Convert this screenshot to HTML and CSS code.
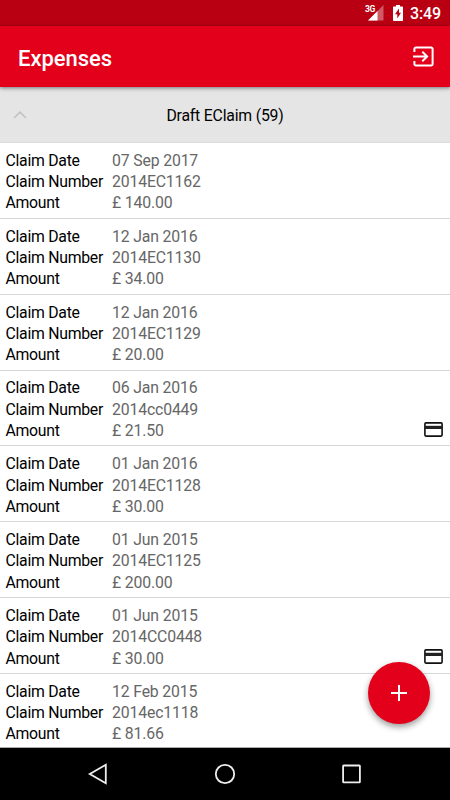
FILE: index.html
```
<!DOCTYPE html>
<html lang="en">
<head>
<meta charset="utf-8">
<title>Expenses</title>
<link rel="stylesheet" href="styles.css">
</head>
<body>
<div class="screen">
  <div class="status">
    <svg class="signal" width="16" height="17" viewBox="0 0 16 17"><path d="M15.500 1V16.500H0z" fill="#fff" opacity=".35"/><path d="M9.500 7V16.500H0z" fill="#fff"/></svg>
    <span class="network">3G</span>
    <svg class="battery" width="10" height="16" viewBox="0 0 10 16"><path d="M3 0h4v1.600h2.200a.8.8 0 0 1 .8.8V15.200a.8.8 0 0 1-.8.8H.8a.8.8 0 0 1-.8-.8V2.400a.8.8 0 0 1 .8-.8H3z" fill="#fff"/><path d="M6 3.500L2 9.300h2.300V13.500L8 7.800H6z" fill="#b90013"/></svg>
    <span class="clock">3:49</span>
  </div>
  <header class="appbar">
    <h1 class="title">Expenses</h1>
    <svg class="exit" width="21" height="21" viewBox="0 0 21 21" fill="none" stroke="#fff" stroke-width="2"><path d="M1.400 6V2.900a1.500 1.500 0 0 1 1.500-1.500H18.100a1.500 1.500 0 0 1 1.500 1.500V18.100a1.500 1.500 0 0 1-1.500 1.500H2.900a1.500 1.500 0 0 1-1.500-1.500V15M0 10.500H13.500M9.300 5.700L14.100 10.500L9.300 15.300"/></svg>
  </header>
  <div class="group">
    <svg class="chevron" width="14" height="8" viewBox="0 0 14 8" fill="none" stroke="#c2c2c2" stroke-width="1.700"><path d="M1 7L7 1.200L13 7"/></svg>
    <span>Draft EClaim (59)</span>
  </div>
  <main class="list">
    <dl class="claim"><dt>Claim Date</dt><dd>07 Sep 2017</dd><dt>Claim Number</dt><dd>2014EC1162</dd><dt>Amount</dt><dd>£ 140.00</dd></dl>
    <dl class="claim"><dt>Claim Date</dt><dd>12 Jan 2016</dd><dt>Claim Number</dt><dd>2014EC1130</dd><dt>Amount</dt><dd>£ 34.00</dd></dl>
    <dl class="claim"><dt>Claim Date</dt><dd>12 Jan 2016</dd><dt>Claim Number</dt><dd>2014EC1129</dd><dt>Amount</dt><dd>£ 20.00</dd></dl>
    <dl class="claim"><dt>Claim Date</dt><dd>06 Jan 2016</dd><dt>Claim Number</dt><dd>2014cc0449</dd><dt>Amount</dt><dd class="with-card">£ 21.50 <svg width="19" height="15" viewBox="0 0 19 15"><rect x=".9" y=".9" width="17.200" height="13.200" rx="1" fill="none" stroke="#111" stroke-width="1.600"/><path d="M1 3.800H18V7H1z" fill="#222"/></svg></dd></dl>
    <dl class="claim"><dt>Claim Date</dt><dd>01 Jan 2016</dd><dt>Claim Number</dt><dd>2014EC1128</dd><dt>Amount</dt><dd>£ 30.00</dd></dl>
    <dl class="claim"><dt>Claim Date</dt><dd>01 Jun 2015</dd><dt>Claim Number</dt><dd>2014EC1125</dd><dt>Amount</dt><dd>£ 200.00</dd></dl>
    <dl class="claim"><dt>Claim Date</dt><dd>01 Jun 2015</dd><dt>Claim Number</dt><dd>2014CC0448</dd><dt>Amount</dt><dd class="with-card">£ 30.00 <svg width="19" height="15" viewBox="0 0 19 15"><rect x=".9" y=".9" width="17.200" height="13.200" rx="1" fill="none" stroke="#111" stroke-width="1.600"/><path d="M1 3.800H18V7H1z" fill="#222"/></svg></dd></dl>
    <dl class="claim"><dt>Claim Date</dt><dd>12 Feb 2015</dd><dt>Claim Number</dt><dd>2014ec1118</dd><dt>Amount</dt><dd>£ 81.66</dd></dl>
  </main>
  <button class="fab" aria-label="Add"><svg width="16" height="16" viewBox="0 0 16 16" stroke="#fff" stroke-width="2"><path d="M8 0V16M0 8H16"/></svg></button>
  <nav class="navbar">
    <svg width="22" height="22" viewBox="0 0 22 22"><path d="M18.800 1.800V20.200L2.800 11z"/></svg>
    <svg width="22" height="22" viewBox="0 0 22 22"><circle cx="11" cy="11" r="9.200"/></svg>
    <svg width="22" height="22" viewBox="0 0 22 22"><rect x="3.100" y="2.500" width="16.800" height="16.800" rx=".6"/></svg>
  </nav>
</div>
</body>
</html>
```
FILE: styles.css
```
* { box-sizing: border-box; }
body { margin: 0; font-family: Roboto, sans-serif; }
svg { display: block; flex: none; }
.screen {
  position: relative;
  display: flex;
  flex-direction: column;
  width: 450px;
  height: 800px;
  overflow: hidden;
  background: #fff;
}
.status {
  position: relative;
  display: flex;
  align-items: center;
  justify-content: flex-end;
  height: 26px;
  padding-right: 9px;
  background: #b90013;
  color: #fff;
}
.signal { margin: 0 9px 1px 0; }
.network {
  position: absolute;
  left: 365px;
  top: 4px;
  font-size: 8.500px;
  line-height: 10px;
  font-weight: 700;
  letter-spacing: -.4px;
}
.battery { margin-right: 7px; }
.clock { width: 31px; font-size: 16px; font-weight: 500; line-height: 26px; padding-top: 2px; letter-spacing: -.1px; }
.appbar {
  position: relative;
  z-index: 1;
  display: flex;
  align-items: center;
  justify-content: space-between;
  height: 61px;
  padding: 0 16px 0 18px;
  background: #e3001b;
  box-shadow: 0 1px 4px rgba(0, 0, 0, .5);
}
.title { margin: 4px 0 0; font-size: 22px; line-height: 26px; font-weight: 500; letter-spacing: -.05px; color: #fff; }
.group {
  display: grid;
  grid-template-columns: 106px 1fr 106px;
  align-items: center;
  height: 56px;
  padding-top: 1px;
  border-bottom: 1px solid #dcdcdc;
  background: #e5e5e5;
  font-size: 15.800px;
  letter-spacing: -.2px;
  text-align: center;
}
.chevron { margin-left: 13px; }
.list { height: 605px; overflow: hidden; border-bottom: 1px solid #aaa; }
.claim {
  display: grid;
  grid-template-columns: 106.500px 1fr;
  grid-auto-rows: 21.300px;
  align-content: start;
  height: 75.850px;
  margin: 0;
  padding: 6.900px 7px 0 5.500px;
  border-bottom: 1px solid #d8d8d8;
  font-size: 15.800px;
  line-height: 21.300px;
}
dt { color: #000; letter-spacing: -.27px; }
dd { margin: 0; color: #666; letter-spacing: -.15px; }
.with-card { display: flex; justify-content: space-between; align-items: center; }
.with-card svg { margin-bottom: 3px; }
.fab {
  position: absolute;
  left: 368px;
  top: 662px;
  display: grid;
  place-items: center;
  width: 62px;
  height: 62px;
  padding: 0;
  border: 0;
  border-radius: 50%;
  background: #e3001b;
  box-shadow: 0 3px 6px rgba(0, 0, 0, .4);
}
.navbar {
  display: flex;
  justify-content: space-between;
  align-items: center;
  height: 52px;
  padding: 0 88px 0 87px;
  background: #000;
}
.navbar svg { fill: none; stroke: #eee; stroke-width: 1.800; }
```
